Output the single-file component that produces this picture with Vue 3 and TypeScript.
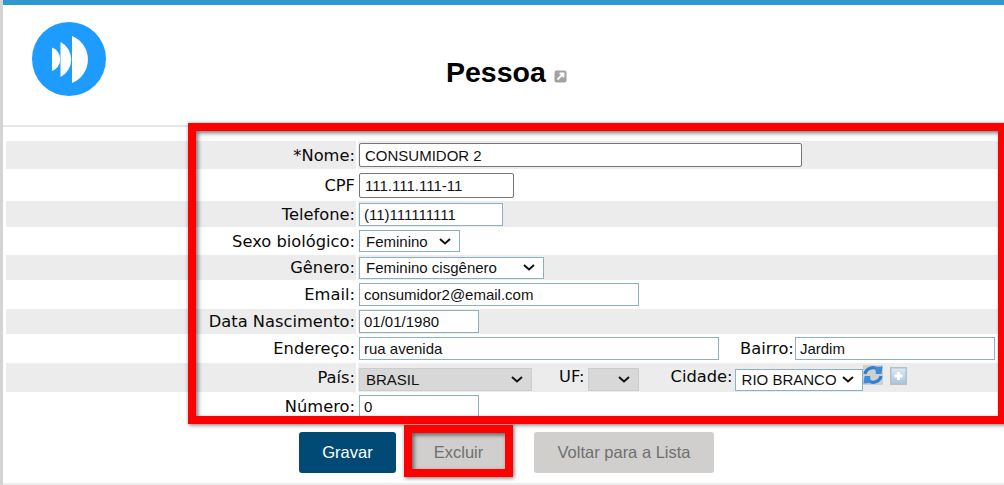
<template>
  <div class="page">
    <div class="top-bar"></div>

    <header class="header">
      <svg class="logo" width="76" height="76" viewBox="31 21 76 76">
        <circle cx="69" cy="59" r="37" fill="#1e9bff" />
        <path d="M72 36A25.3 25.3 0 0 1 72 83Z" fill="#fff" />
        <path d="M60.500 42A19.600 19.600 0 0 1 60.500 77Z" fill="#fff" />
        <path d="M52 47.500A12.500 12.500 0 0 1 52 71Z" fill="#fff" />
      </svg>
      <h1 class="title">Pessoa</h1>
      <svg class="ext-icon" width="13" height="13" viewBox="0 0 13 13">
        <rect x="0.500" y="0.500" width="12" height="12" rx="2" fill="#a2a2a2" />
        <path d="M3.500 9.500 8.500 4.500M5.500 3.500H9.500V7.500" fill="none" stroke="#fff" stroke-width="1.800" />
      </svg>
    </header>

    <div class="form">
      <div class="row h28 shade">
        <label class="lbl">*Nome:</label>
        <div class="val"><input class="inp dark w443" value="CONSUMIDOR 2" /></div>
      </div>
      <div class="row h32">
        <label class="lbl">CPF</label>
        <div class="val"><input class="inp dark w155 tall" value="111.111.111-11" /></div>
      </div>
      <div class="row h26 shade">
        <label class="lbl">Telefone:</label>
        <div class="val"><input class="inp w144" value="(11)111111111" /></div>
      </div>
      <div class="row h28">
        <label class="lbl">Sexo biológico:</label>
        <div class="val">
          <select class="sel w101"><option>Feminino</option></select>
        </div>
      </div>
      <div class="row h25 shade">
        <label class="lbl">Gênero:</label>
        <div class="val">
          <select class="sel w185"><option>Feminino cisgênero</option></select>
        </div>
      </div>
      <div class="row h29">
        <label class="lbl">Email:</label>
        <div class="val"><input class="inp w280" value="consumidor2@email.com" /></div>
      </div>
      <div class="row h25 shade">
        <label class="lbl">Data Nascimento:</label>
        <div class="val"><input class="inp w120" value="01/01/1980" /></div>
      </div>
      <div class="row h29">
        <label class="lbl">Endereço:</label>
        <div class="val">
          <input class="inp w360" value="rua avenida" />
          <label class="lbl-inline bairro">Bairro:</label>
          <input class="inp w200" value="Jardim" />
        </div>
      </div>
      <div class="row h29 shade">
        <label class="lbl">País:</label>
        <div class="val">
          <select class="sel off drop w173"><option>BRASIL</option></select>
          <label class="lbl-inline uf up">UF:</label>
          <select class="sel off drop w51"></select>
          <label class="lbl-inline cidade up">Cidade:</label>
          <select class="sel drop w128"><option>RIO BRANCO</option></select>
          <svg class="refresh" width="20" height="20" viewBox="0 0 20 20">
            <rect width="20" height="20" fill="#cfcfcf" />
            <path d="M2 9A8 7.500 0 0 1 15 4.500" fill="none" stroke="#2f7fd0" stroke-width="3.200" />
            <path d="M18 11A8 7.500 0 0 1 5 15.500" fill="none" stroke="#2f7fd0" stroke-width="3.200" />
            <path d="M12 2 19.500 1.500 18.500 9 13 9ZM8 18 .500 18.500 1.500 11 7 11Z" fill="#3b8ddb" />
          </svg>
          <svg class="plus" width="17" height="18" viewBox="0 0 17 18">
            <defs>
              <linearGradient id="plus-bg" x1="0" y1="0" x2="0" y2="1">
                <stop offset="0" stop-color="#dbe9f5" />
                <stop offset="1" stop-color="#a9c5de" />
              </linearGradient>
            </defs>
            <rect width="17" height="18" fill="#b3bfca" />
            <rect x="1.500" y="1.500" width="14" height="15" fill="url(#plus-bg)" />
            <path d="M8.500 5V13M4.500 9H12.500" stroke="#fff" stroke-width="3" />
          </svg>
        </div>
      </div>
      <div class="row h29">
        <label class="lbl">Número:</label>
        <div class="val"><input class="inp w120" value="0" /></div>
      </div>
    </div>

    <div class="actions">
      <button class="btn primary">Gravar</button>
      <button class="btn muted excluir">Excluir</button>
      <button class="btn muted voltar">Voltar para a Lista</button>
    </div>
    <div class="bottom-line"></div>

    <!-- marcações vermelhas por cima da tela -->
    <div class="mark mark-form"></div>
    <div class="mark mark-btn"></div>
  </div>
</template>

<script setup lang="ts"></script>

<style>
html,
body {
  margin: 0;
  background: #fff;
}
</style>

<style scoped>
.page {
  position: relative;
  box-sizing: border-box;
  width: 1004px;
  height: 485px;
  overflow: hidden;
  border-left: 3px solid #d4d4d4;
  background: #fff;
  font-family: "Liberation Sans", Arial, sans-serif;
}

.top-bar {
  height: 5px;
  background: #3097d1;
}

.header {
  box-sizing: border-box;
  display: flex;
  align-items: flex-start;
  height: 122px;
  border-bottom: 2px solid #e6e6e6;
  padding: 16px 0 0 28px;
}

.logo {
  flex: none;
}

.title {
  margin: 33px 0 0 339px;
  font-size: 28.5px;
  line-height: 36px;
  font-weight: bold;
  color: #000;
}

.ext-icon {
  margin: 49px 0 0 8px;
}

.form {
  margin: 14px 0 0 3px;
  width: 992px;
}

.row {
  display: flex;
  gap: 2px;
}

.h25 { height: 25px; }
.h26 { height: 26px; }
.h28 { height: 28px; }
.h29 { height: 29px; }
.h32 { height: 32px; }

.lbl {
  flex: none;
  box-sizing: border-box;
  width: 350px;
  padding: 0 1px 0 0;
  display: flex;
  align-items: center;
  justify-content: flex-end;
  font-family: "DejaVu Sans", Verdana, sans-serif;
  font-size: 16.3px;
  color: #0a0a0a;
}

.val {
  flex: 1;
  display: flex;
  align-items: center;
  padding-left: 1px;
}

.shade .lbl,
.shade .val {
  background: #ececec;
}

.lbl-inline.up {
  padding-bottom: 2px;
}

.lbl-inline {
  font-family: "DejaVu Sans", Verdana, sans-serif;
  font-size: 16.3px;
  color: #0a0a0a;
}

.bairro { margin-left: 21px; margin-right: 1px; }
.uf { margin-left: 27px; margin-right: 3px; }
.cidade { margin-left: 32px; margin-right: 2px; }

.inp {
  box-sizing: border-box;
  height: 23px;
  padding: 0 4px;
  border: 1px solid #8db1c4;
  background: #fff;
  font-family: "Liberation Sans", Arial, sans-serif;
  font-size: 15px;
  color: #111;
  outline: none;
}

.inp.dark {
  height: 24px;
  padding: 0 5px;
  border-color: #767676;
  border-radius: 2px;
}

.inp.tall {
  height: 25px;
}

.sel {
  box-sizing: border-box;
  height: 22px;
  padding: 0 0 0 6px;
  border: 1px solid #8db1c4;
  border-radius: 0;
  appearance: none;
  background: #fff url("data:image/svg+xml,%3Csvg xmlns='http://www.w3.org/2000/svg' width='12' height='7'%3E%3Cpath d='M1 1l5 4.500 5-4.500' fill='none' stroke='%23111' stroke-width='2'/%3E%3C/svg%3E") no-repeat right 8px center;
  font-family: "Liberation Sans", Arial, sans-serif;
  font-size: 15px;
  color: #111;
}

.sel.off {
  height: 23px;
  border-color: #ccc;
  background-color: #d8d8d8;
}

.sel.drop {
  margin-top: 4px;
}

.w51 { width: 51px; }
.w101 { width: 101px; }
.w120 { width: 120px; }
.w128 { width: 128px; }
.w144 { width: 144px; }
.w155 { width: 155px; }
.w173 { width: 173px; }
.w185 { width: 185px; }
.w200 { width: 200px; }
.w280 { width: 280px; }
.w360 { width: 360px; }
.w443 { width: 443px; }

.refresh {
  flex: none;
  margin-bottom: 5px;
}

.plus {
  flex: none;
  margin: 0 0 3px 7px;
}

.actions {
  display: flex;
  margin: 11px 0 0 296px;
}

.btn {
  box-sizing: border-box;
  height: 41px;
  border: 0;
  border-radius: 3px;
  font-family: "Liberation Sans", Arial, sans-serif;
  font-size: 16.500px;
}

.primary {
  width: 97px;
  background: #004a75;
  color: #fff;
}

.muted {
  background: #d0cfce;
  color: #6f6f6f;
}

.excluir {
  width: 93px;
  margin-left: 16px;
}

.voltar {
  width: 180px;
  margin-left: 29px;
}

.bottom-line {
  height: 2px;
  margin-top: 10px;
  background: #eeeeee;
}

.mark {
  position: absolute;
  box-sizing: border-box;
  border: 8px solid #ff0000;
  box-shadow: 1px 1px 4px rgba(0, 0, 0, 0.55), inset 2px 2px 4px rgba(0, 0, 0, 0.55);
}

.mark-form {
  left: 185px;
  top: 123px;
  width: 818px;
  height: 301px;
}

.mark-btn {
  left: 401px;
  top: 425px;
  width: 109px;
  height: 52px;
}
</style>
